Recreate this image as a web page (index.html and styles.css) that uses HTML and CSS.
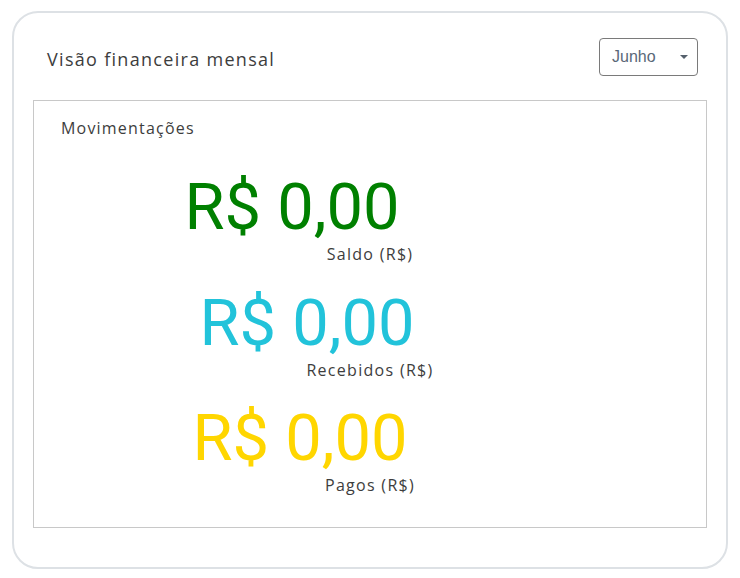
FILE: index.html
```html
<!DOCTYPE html>
<html lang="pt-BR">
<head>
<meta charset="utf-8">
<link rel="stylesheet" href="styles.css">
</head>
<body>
<div class="card">
  <div class="card-header">
    <h2 class="title">Visão financeira mensal</h2>
    <div class="select">
      <span class="select-value">Junho</span>
      <span class="caret"></span>
    </div>
  </div>
  <div class="panel">
    <div class="panel-title">Movimentações</div>
    <div class="stat stat-saldo">
      <div class="amount green">R$ 0,00</div>
      <div class="label">Saldo (R$)</div>
    </div>
    <div class="stat stat-recebidos">
      <div class="amount cyan">R$ 0,00</div>
      <div class="label">Recebidos (R$)</div>
    </div>
    <div class="stat stat-pagos">
      <div class="amount yellow">R$ 0,00</div>
      <div class="label">Pagos (R$)</div>
    </div>
  </div>
</div>
</body>
</html>
```
FILE: styles.css
```css
* { box-sizing: border-box; }
html, body { margin: 0; padding: 0; background: #fff; }
body {
  padding: 11px 12px 9px 12px;
  font-family: "Open Sans", "Noto Sans", sans-serif;
  color: #444;
}
.card {
  width: 716px;
  height: 558px;
  border: 2px solid #dde1e5;
  border-radius: 26px;
  padding: 0 19px;
  display: flex;
  flex-direction: column;
}
.card-header {
  display: flex;
  justify-content: space-between;
  align-items: center;
  height: 87px;
  padding: 2px 9px 0 14px;
}
.title {
  margin: 3px 0 0 0;
  font-size: 18px;
  font-weight: 400;
  color: #3d3d3d;
  letter-spacing: 1.3px;
}
.select {
  width: 99px;
  height: 38px;
  border: 1px solid #7a7a7a;
  border-radius: 4px;
  display: flex;
  align-items: center;
  justify-content: space-between;
  padding: 0 9px 0 12px;
  margin-top: -2px;
}
.select-value {
  font-family: "Liberation Sans", Arial, sans-serif;
  font-size: 16px;
  color: #5a6878;
}
.caret {
  width: 0;
  height: 0;
  border-left: 4px solid transparent;
  border-right: 4px solid transparent;
  border-top: 4px solid #55606c;
}
.panel {
  border: 1px solid #c8c8c8;
  height: 428px;
  padding: 16px 0 0 0;
}
.panel-title {
  padding-left: 27px;
  font-size: 16px;
  color: #3d3d3d;
  letter-spacing: 1.2px;
  line-height: 22px;
}
.stat {
  display: flex;
  flex-direction: column;
  align-items: center;
}
.amount {
  font-family: Roboto, sans-serif;
  font-size: 65px;
  line-height: 75px;
}
.label {
  font-size: 16px;
  letter-spacing: 1.3px;
  line-height: 22px;
  color: #3d3d3d;
}
.stat-saldo { margin-top: 31px; }
.stat-saldo .amount { margin-right: 156px; margin-bottom: -2px; }
.stat-recebidos { margin-top: 21px; }
.stat-recebidos .amount { margin-right: 126px; margin-bottom: -2px; }
.stat-pagos { margin-top: 20px; }
.stat-pagos .amount { margin-right: 140px; margin-bottom: -2px; }
.green { color: #008000; }
.cyan { color: #22c3da; }
.yellow { color: #ffd600; }
```
